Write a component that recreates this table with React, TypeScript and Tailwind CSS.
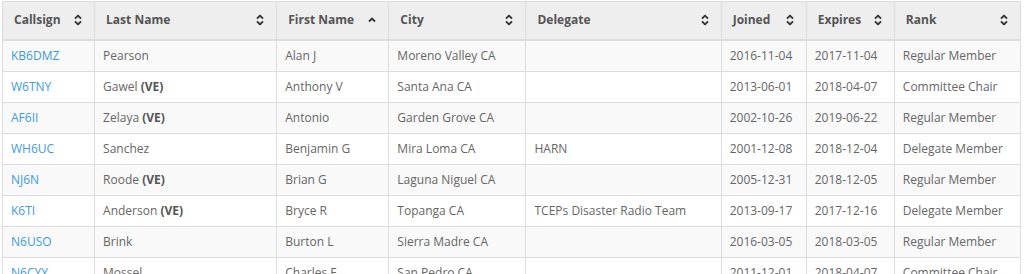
import { ReactNode } from 'react';

type Member = {
  callsign: string;
  lastName: string;
  ve?: boolean;
  firstName: string;
  city: string;
  delegate: string;
  joined: string;
  expires: string;
  rank: string;
};

const members: Member[] = [
  { callsign: 'KB6DMZ', lastName: 'Pearson', firstName: 'Alan J', city: 'Moreno Valley CA', delegate: '', joined: '2016-11-04', expires: '2017-11-04', rank: 'Regular Member' },
  { callsign: 'W6TNY', lastName: 'Gawel', ve: true, firstName: 'Anthony V', city: 'Santa Ana CA', delegate: '', joined: '2013-06-01', expires: '2018-04-07', rank: 'Committee Chair' },
  { callsign: 'AF6II', lastName: 'Zelaya', ve: true, firstName: 'Antonio', city: 'Garden Grove CA', delegate: '', joined: '2002-10-26', expires: '2019-06-22', rank: 'Regular Member' },
  { callsign: 'WH6UC', lastName: 'Sanchez', firstName: 'Benjamin G', city: 'Mira Loma CA', delegate: 'HARN', joined: '2001-12-08', expires: '2018-12-04', rank: 'Delegate Member' },
  { callsign: 'NJ6N', lastName: 'Roode', ve: true, firstName: 'Brian G', city: 'Laguna Niguel CA', delegate: '', joined: '2005-12-31', expires: '2018-12-05', rank: 'Regular Member' },
  { callsign: 'K6TI', lastName: 'Anderson', ve: true, firstName: 'Bryce R', city: 'Topanga CA', delegate: 'TCEPs Disaster Radio Team', joined: '2013-09-17', expires: '2017-12-16', rank: 'Delegate Member' },
  { callsign: 'N6USO', lastName: 'Brink', firstName: 'Burton L', city: 'Sierra Madre CA', delegate: '', joined: '2016-03-05', expires: '2018-03-05', rank: 'Regular Member' },
  { callsign: 'N6CYY', lastName: 'Mossel', firstName: 'Charles E', city: 'San Pedro CA', delegate: '', joined: '2011-12-01', expires: '2018-04-07', rank: 'Committee Chair' },
];

// Sortable header columns; widths measured off the screenshot
const columns: { label: string; width: string; sort: 'both' | 'asc' }[] = [
  { label: 'Callsign', width: 'w-[92px]', sort: 'both' },
  { label: 'Last Name', width: 'w-[182px]', sort: 'both' },
  { label: 'First Name', width: 'w-[112px]', sort: 'asc' },
  { label: 'City', width: 'w-[137px]', sort: 'both' },
  { label: 'Delegate', width: 'w-[195px]', sort: 'both' },
  { label: 'Joined', width: 'w-[85px]', sort: 'both' },
  { label: 'Expires', width: 'w-[88px]', sort: 'both' },
  { label: 'Rank', width: 'w-[126px]', sort: 'both' },
];

function SortIcon({ sort }: { sort: 'both' | 'asc' }) {
  return (
    <svg width="8" height="11" viewBox="0 0 8 11" className="absolute right-[12px] top-1/2 -translate-y-1/2">
      {sort === 'both' ? (
        <>
          <path d="M1 4.2 L4 1.2 L7 4.2" fill="none" stroke="#333" strokeWidth="1.9" />
          <path d="M1 6.8 L4 9.8 L7 6.8" fill="none" stroke="#333" strokeWidth="1.9" />
        </>
      ) : (
        <path d="M1 7 L4 4 L7 7" fill="none" stroke="#333" strokeWidth="1.9" />
      )}
    </svg>
  );
}

function Cell({ children }: { children?: ReactNode }) {
  return (
    <td className="border border-[#dddddd] px-[8px] py-[6px] leading-[18.14px] align-top whitespace-nowrap">
      {children}
    </td>
  );
}

export default function App() {
  return (
    <div className="bg-white w-[1024px] h-[274px] overflow-hidden pt-[1px] pl-[2px]">
      <table
        className="border-collapse table-fixed w-[1019px] text-[12px] text-[#666666]"
        style={{ fontFamily: '"Open Sans", "Liberation Sans", sans-serif' }}
      >
        <thead>
          <tr className="bg-[#eeeeee]">
            {columns.map((c) => (
              <th
                key={c.label}
                className={`${c.width} relative border border-[#dddddd] border-b-2 h-[38px] pl-[11px] pr-[26px] text-left font-bold text-[#555555] whitespace-nowrap`}
              >
                {c.label}
                <SortIcon sort={c.sort} />
              </th>
            ))}
          </tr>
        </thead>
        <tbody>
          {members.map((m, i) => (
            <tr key={m.callsign} className={i % 2 === 0 ? 'bg-[#f9f9f9]' : 'bg-white'}>
              <Cell>
                <a href="#" className="text-[#3c9be2]">{m.callsign}</a>
              </Cell>
              <Cell>
                {m.lastName}
                {m.ve && <b className="font-bold text-[#555555]"> (VE)</b>}
              </Cell>
              <Cell>{m.firstName}</Cell>
              <Cell>{m.city}</Cell>
              <Cell>{m.delegate}</Cell>
              <Cell>{m.joined}</Cell>
              <Cell>{m.expires}</Cell>
              <Cell>{m.rank}</Cell>
            </tr>
          ))}
        </tbody>
      </table>
    </div>
  );
}
